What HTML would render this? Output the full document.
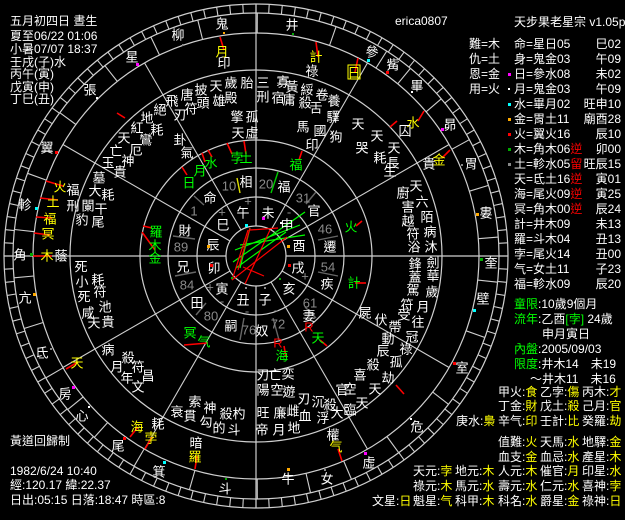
<!DOCTYPE html>
<html><head><meta charset="utf-8"><style>
html,body{margin:0;padding:0;background:#000;width:625px;height:520px;overflow:hidden}
svg{display:block}
text{font-family:"Liberation Sans","Noto Sans CJK TC","WenQuanYi Zen Hei",sans-serif}
.c text{font-size:13px;fill:#fff;text-anchor:middle;dominant-baseline:central}
.y{fill:#ff0!important}.g{fill:#0f0!important}.r{fill:#f00!important}.n{fill:#8a8a8a!important}
.h text{font-size:12px;fill:#fff}
.t text{font-size:12px;fill:#fff}
</style></head><body>
<svg id="s" width="625" height="520" viewBox="0 0 625 520" xmlns="http://www.w3.org/2000/svg">
<rect width="625" height="520" fill="#000"/>
<g fill="none" stroke="#cfcfcf" stroke-width="1.2">
<circle cx="256" cy="256" r="252"/>
<circle cx="256" cy="256" r="243"/>
<circle cx="256" cy="256" r="223"/>
<circle cx="256" cy="256" r="186"/>
<circle cx="256" cy="256" r="116"/>
<circle cx="256" cy="256" r="88"/>
<circle cx="256" cy="256" r="59"/>
<circle cx="256" cy="256" r="30"/>
<line x1="256" y1="4" x2="256" y2="226"/>
<line x1="256" y1="286" x2="256" y2="508"/>
<line x1="4" y1="256" x2="226" y2="256"/>
<line x1="286" y1="256" x2="508" y2="256"/>
</g>
<g id="geo" fill="none" stroke="#cfcfcf" stroke-width="1.1"></g>
<g stroke-width="1.2">
<line x1="235" y1="250" x2="300" y2="225" stroke="#0f0"/>
<line x1="233" y1="262" x2="305" y2="212" stroke="#0f0"/>
<line x1="236" y1="268" x2="286" y2="232" stroke="#0f0"/>
<line x1="240" y1="245" x2="305" y2="235" stroke="#0f0"/>
<line x1="250" y1="228" x2="240" y2="268" stroke="#0f0"/>
<line x1="248" y1="230" x2="232" y2="280" stroke="#f00"/>
<line x1="250" y1="230" x2="278" y2="228" stroke="#f00"/>
<line x1="232" y1="280" x2="287" y2="237" stroke="#f00"/>
<line x1="243" y1="267" x2="264" y2="276" stroke="#f00"/>
<line x1="238" y1="270" x2="250" y2="228" stroke="#f00"/>
<line x1="245" y1="284" x2="270" y2="230" stroke="#f00"/>
</g>
<g stroke-width="1.4">
<line x1="237" y1="178" x2="240" y2="193" stroke="#dd0"/>
<line x1="278" y1="172" x2="271" y2="193" stroke="#0c0"/>
<line x1="194" y1="196" x2="204" y2="205" stroke="#666"/>
<line x1="316" y1="192" x2="306" y2="204" stroke="#666"/>
<line x1="173" y1="236" x2="195" y2="239" stroke="#666"/>
<line x1="338" y1="236" x2="318" y2="240" stroke="#666"/>
<line x1="175" y1="276" x2="196" y2="272" stroke="#666"/>
<line x1="338" y1="276" x2="318" y2="272" stroke="#666"/>
<line x1="196" y1="315" x2="206" y2="303" stroke="#666"/>
<line x1="316" y1="318" x2="305" y2="307" stroke="#666"/>
<line x1="240" y1="340" x2="244" y2="318" stroke="#666"/>
<line x1="279" y1="340" x2="273" y2="318" stroke="#666"/>
</g>
<g stroke="#f00" stroke-width="1.6">
<line x1="220" y1="37" x2="224" y2="50"/><line x1="316" y1="42" x2="318" y2="57"/>
<line x1="358" y1="58" x2="355" y2="72"/><line x1="424" y1="111" x2="418" y2="121"/>
<line x1="450" y1="150" x2="442" y2="158"/><line x1="46" y1="181" x2="63" y2="186"/>
<line x1="40" y1="198" x2="58" y2="200"/><line x1="36" y1="217" x2="52" y2="218"/>
<line x1="34" y1="233" x2="50" y2="235"/><line x1="33" y1="256" x2="52" y2="256"/>
<line x1="66" y1="369" x2="78" y2="362"/><line x1="130" y1="437" x2="138" y2="427"/>
<line x1="145" y1="449" x2="152" y2="437"/><line x1="195" y1="469" x2="197" y2="456"/>
<line x1="342" y1="461" x2="338" y2="449"/><line x1="227" y1="143" x2="232" y2="154"/>
<line x1="244" y1="141" x2="246" y2="154"/><line x1="302" y1="151" x2="299" y2="160"/>
<line x1="182" y1="167" x2="187" y2="175"/><line x1="202" y1="153" x2="205" y2="162"/>
<line x1="208" y1="150" x2="212" y2="157"/><line x1="143" y1="226" x2="152" y2="228"/>
<line x1="142" y1="232" x2="155" y2="250"/><line x1="184" y1="345" x2="208" y2="343"/>
<line x1="286" y1="357" x2="284" y2="346"/><line x1="327" y1="346" x2="320" y2="340"/>
<line x1="366" y1="283" x2="355" y2="283"/><line x1="362" y1="221" x2="356" y2="226"/>
<line x1="404" y1="394" x2="396" y2="385"/><line x1="125" y1="118" x2="117" y2="113"/>
<line x1="397" y1="121" x2="390" y2="127"/>
</g>
<g class="c">
<text x="222" y="24">鬼</text><text x="178" y="35">柳</text><text x="132" y="57">星</text><text x="90" y="90">張</text>
<text x="47" y="148">翼</text><text x="25" y="205">軫</text><text x="20" y="255">角</text><text x="25" y="298">亢</text>
<text x="42" y="353">氐</text><text x="65" y="394">房</text><text x="82" y="416">心</text><text x="118" y="446">尾</text>
<text x="159" y="472">箕</text><text x="225" y="489">斗</text><text x="288" y="479">牛</text><text x="327" y="479">女</text>
<text x="369" y="463">虛</text><text x="417" y="427">危</text><text x="462" y="368">室</text><text x="483" y="299">壁</text>
<text x="491" y="263">奎</text><text x="486" y="213">婁</text><text x="471" y="164">胃</text><text x="450" y="125">昴</text>
<text x="417" y="86">畢</text><text x="393" y="65">觜</text><text x="372" y="52">參</text><text x="292" y="25">井</text>
<text x="222" y="52" class="y">月</text><text x="224" y="63">印</text>
<text x="316" y="57" class="y">計</text><text x="312" y="71">祿</text>
<text x="354" y="73" class="y">日</text><text x="413" y="123" class="y">水</text><text x="439" y="160" class="y">金</text>
<text x="60" y="187" class="y">火</text><text x="73" y="190">福</text>
<text x="53" y="202" class="y">土</text><text x="73" y="206">刑</text>
<text x="50" y="219" class="y">福</text><text x="48" y="234" class="y">冥</text>
<text x="47" y="256" class="y">木</text><text x="61" y="256">蔭</text>
<text x="77" y="363" class="y">天</text><text x="137" y="427" class="y">海</text><text x="151" y="438" class="y">孛</text>
<text x="158" y="424">耗</text><text x="196" y="443">暗</text><text x="195" y="457" class="y">羅</text>
<text x="336" y="447" class="y">气</text><text x="333" y="435">權</text>
<text x="237" y="158" class="g">孛</text><text x="246" y="158" class="g">土</text>
<text x="296" y="165" class="g">福</text><text x="189" y="183" class="g">日</text>
<text x="200" y="171" class="g">月</text><text x="211" y="163" class="g">水</text>
<text x="156" y="232" class="g">羅</text><text x="155" y="246" class="g">木</text><text x="155" y="258" class="g">金</text>
<text x="190" y="333" class="g">冥</text><text x="204" y="342" class="g">气</text>
<text x="282" y="356" class="g">海</text><text x="278" y="343" class="r">R</text>
<text x="318" y="338" class="g">天</text><text x="309" y="327" class="r">R</text>
<text x="354" y="283" class="g">計</text><text x="351" y="227" class="g">火</text>
<text x="247" y="83">胎</text><text x="231" y="83">歲</text><text x="231" y="98">殿</text>
<text x="216" y="86">天</text><text x="219" y="101">雄</text><text x="201" y="90">披</text><text x="203" y="103">頭</text>
<text x="187" y="95">唐</text><text x="191" y="109">符</text><text x="172" y="101">飛</text><text x="180" y="115">刃</text>
<text x="160" y="110">絕</text><text x="147" y="118">地</text><text x="157" y="130">耗</text><text x="137" y="128">紅</text>
<text x="146" y="140">鸞</text><text x="124" y="138">天</text><text x="136" y="150">厄</text><text x="116" y="151">亡</text>
<text x="128" y="161">神</text><text x="108" y="163">玉</text><text x="120" y="172">貴</text>
<text x="237" y="117">擎</text><text x="252" y="117">孤</text><text x="238" y="133">天</text><text x="252" y="133">虛</text>
<text x="180" y="140">卦</text><text x="187" y="153">氣</text>
<text x="99" y="178">墓</text><text x="95" y="191">大</text><text x="108" y="195">耗</text>
<text x="88" y="206">闌</text><text x="101" y="209">干</text><text x="82" y="220">豹</text><text x="98" y="222">尾</text>
<text x="263" y="83">三</text><text x="283" y="82">寡</text><text x="292" y="87">黃</text>
<text x="263" y="97">刑</text><text x="278" y="98">宿</text><text x="289" y="100">庸</text>
<text x="307" y="90">綏</text><text x="305" y="103">殺</text><text x="322" y="95">卷</text><text x="316" y="108">舌</text><text x="334" y="101">養</text>
<text x="320" y="131">國</text><text x="312" y="145">印</text>
<text x="333" y="117">驛</text><text x="303" y="127">馬</text><text x="358" y="124">天</text><text x="336" y="137">狗</text>
<text x="377" y="136">天</text><text x="362" y="148">哭</text><text x="394" y="148">天</text><text x="380" y="158">耗</text>
<text x="393" y="163">長</text><text x="390" y="171">生</text><text x="405" y="131">囚</text><text x="429" y="164">貴</text>
<text x="416" y="186">天</text><text x="403" y="193">廚</text><text x="422" y="202">六</text><text x="408" y="207">害</text>
<text x="427" y="217">陌</text><text x="408" y="221">越</text><text x="430" y="232">病</text><text x="413" y="234">符</text>
<text x="431" y="247">沐</text><text x="414" y="247">浴</text>
<text x="415" y="264">鋒</text><text x="433" y="263">劍</text><text x="415" y="277">蓋</text><text x="433" y="276">華</text>
<text x="413" y="290">駕</text><text x="432" y="292">歲</text><text x="407" y="305">符</text><text x="423" y="307">月</text>
<text x="404" y="315">受</text><text x="418" y="322">往</text><text x="395" y="327">帶</text><text x="412" y="337">冠</text>
<text x="388" y="339">動</text><text x="406" y="349">祿</text><text x="383" y="351">辰</text><text x="396" y="362">孤</text>
<text x="373" y="365">殺</text><text x="388" y="378">劫</text><text x="360" y="375">喜</text><text x="375" y="389">天</text>
<text x="350" y="389">空</text><text x="362" y="403">天</text><text x="342" y="390">官</text><text x="350" y="410">臨</text>
<text x="330" y="405">殺</text><text x="337" y="413">大</text><text x="318" y="402">沉</text><text x="323" y="418">浮</text>
<text x="304" y="399">刃</text><text x="305" y="416">血</text>
<text x="365" y="313">屍</text><text x="381" y="320">伏</text>
<text x="263" y="375">刃</text><text x="275" y="375">亡</text><text x="288" y="374">奕</text>
<text x="263" y="390">陽</text><text x="277" y="390">空</text><text x="289" y="392">遊</text>
<text x="263" y="413">旺</text><text x="280" y="413">廉</text><text x="293" y="411">雌</text>
<text x="262" y="430">帝</text><text x="279" y="430">月</text><text x="294" y="428">地</text>
<text x="108" y="350">病</text><text x="128" y="358">殺</text><text x="117" y="367">月</text><text x="138" y="367">符</text>
<text x="127" y="378">年</text><text x="148" y="376">昌</text><text x="138" y="387">文</text>
<text x="177" y="412">衰</text><text x="195" y="402">索</text><text x="190" y="416">貫</text><text x="210" y="408">神</text>
<text x="206" y="422">勾</text><text x="226" y="414">殺</text><text x="219" y="428">的</text><text x="239" y="414">杓</text><text x="234" y="430">斗</text>
<text x="81" y="267">死</text><text x="82" y="282">小</text><text x="98" y="280">耗</text><text x="84" y="297">死</text>
<text x="100" y="292">符</text><text x="88" y="313">咸</text><text x="105" y="307">池</text><text x="94" y="323">天</text><text x="108" y="322">貴</text>
<text x="246" y="182">相</text><text x="229" y="186" class="n">10</text>
<text x="284" y="187">福</text><text x="266" y="184" class="n">20</text>
<text x="210" y="198">命</text><text x="194" y="211" class="n">1</text>
<text x="314" y="211">官</text><text x="303" y="198" class="n">31</text>
<text x="185" y="231">財</text><text x="181" y="247" class="n">89</text>
<text x="330" y="247">遷</text><text x="325" y="229" class="n">46</text>
<text x="183" y="267">兄</text><text x="187" y="285" class="n">84</text>
<text x="327" y="284">疾</text><text x="328" y="267" class="n">54</text>
<text x="197" y="303">田</text><text x="211" y="316" class="n">80</text>
<text x="309" y="316">妻</text><text x="310" y="303" class="n">61</text>
<text x="231" y="326">嗣</text><text x="249" y="330" class="n">76</text>
<text x="262" y="331">奴</text><text x="278" y="324" class="n">72</text>
<text x="243" y="213">午</text><text x="268" y="213">未</text><text x="223" y="225">巳</text><text x="287" y="225">申</text>
<text x="213" y="245">辰</text><text x="299" y="246">酉</text><text x="214" y="268">卯</text><text x="298" y="268">戌</text>
<text x="222" y="289">寅</text><text x="289" y="289">亥</text><text x="243" y="300">丑</text><text x="265" y="300">子</text>
<text x="248" y="201" class="n">+</text><text x="222" y="212" class="n">+</text><text x="289" y="212" class="n">-</text>
<text x="305" y="276" class="n">+</text><text x="210" y="287" class="n">+</text><text x="222" y="301" class="n">-</text><text x="247" y="311" class="n">-</text><text x="276" y="310" class="n">-</text>
</g>
<g>
<rect x="223" y="32" width="2" height="2" fill="#fa0"/><rect x="182" y="44" width="2" height="2" fill="#888"/>
<rect x="136" y="63" width="3" height="3" fill="#f0f"/><rect x="96" y="97" width="2" height="2" fill="#fff"/>
<rect x="55" y="151" width="3" height="3" fill="#f00"/><rect x="35" y="207" width="3" height="3" fill="#0ff"/>
<rect x="30" y="253" width="3" height="3" fill="#0a0"/><rect x="33" y="293" width="3" height="3" fill="#fa0"/>
<rect x="50" y="348" width="2" height="2" fill="#888"/><rect x="72" y="386" width="3" height="3" fill="#f0f"/>
<rect x="88" y="406" width="2" height="2" fill="#fff"/><rect x="123" y="437" width="3" height="3" fill="#f00"/>
<rect x="163" y="461" width="3" height="3" fill="#0ff"/><rect x="225" y="478" width="2" height="2" fill="#0a0"/>
<rect x="287" y="468" width="3" height="3" fill="#fa0"/><rect x="324" y="469" width="2" height="2" fill="#888"/>
<rect x="364" y="452" width="3" height="3" fill="#f0f"/><rect x="410" y="418" width="2" height="2" fill="#fff"/>
<rect x="453" y="362" width="3" height="3" fill="#f00"/><rect x="473" y="309" width="3" height="3" fill="#0ff"/>
<rect x="480" y="258" width="3" height="3" fill="#0a0"/><rect x="476" y="213" width="3" height="3" fill="#fa0"/>
<rect x="461" y="164" width="2" height="2" fill="#888"/><rect x="441" y="128" width="3" height="3" fill="#f0f"/>
<rect x="411" y="91" width="2" height="2" fill="#fff"/><rect x="386" y="71" width="3" height="3" fill="#f00"/>
<rect x="367" y="59" width="3" height="3" fill="#0ff"/><rect x="292" y="33" width="2" height="2" fill="#0a0"/>
<rect x="245" y="224" width="3" height="3" fill="#0ff"/><rect x="262" y="217" width="3" height="3" fill="#f0f"/>
<rect x="280" y="222" width="2" height="2" fill="#fff"/><rect x="207" y="245" width="3" height="3" fill="#fa0"/>
<rect x="287" y="245" width="3" height="3" fill="#fa0"/><rect x="288" y="264" width="3" height="3" fill="#f00"/>
<rect x="210" y="264" width="3" height="3" fill="#f00"/><rect x="231" y="277" width="2" height="2" fill="#0a0"/>
<rect x="279" y="278" width="2" height="2" fill="#0a0"/><rect x="245" y="287" width="2" height="2" fill="#888"/>
<rect x="264" y="287" width="2" height="2" fill="#888"/>
</g>
<rect x="348" y="65" width="12" height="14" fill="none" stroke="#ff0" stroke-width="1"/>
<g class="h">
<text x="10" y="25">五月初四日 晝生</text>
<text x="10" y="40">夏至06/22 01:06</text>
<text x="10" y="53">小暑07/07 18:37</text>
<text x="10" y="66">壬戌(子)水</text>
<text x="10" y="78">丙午(寅)</text>
<text x="10" y="91">戊寅(申)</text>
<text x="10" y="103">丁巳(丑)</text>
<text x="10" y="445">黃道回歸制</text>
<text x="10" y="475">1982/6/24 10:40</text>
<text x="10" y="489">經:120.17 緯:22.37</text>
<text x="10" y="504">日出:05:15 日落:18:47 時區:8</text>
<text x="395" y="25">erica0807</text>
</g>
<g class="t">
<text x="514" y="26">天步果老星宗 v1.05p</text>
<text x="469" y="48">難=木</text><text x="469" y="63">仇=土</text><text x="469" y="78">恩=金</text><text x="469" y="93">用=火</text>
<text x="514" y="48" fill="#ff0">命=星日05</text><text x="514" y="63" fill="#ff0">身=鬼金03</text>
<text x="514" y="78" fill="#ff0">日=參水08</text><text x="514" y="93" fill="#ff0">月=鬼金03</text>
<text x="514" y="108" fill="#ff0">水=畢月02</text><text x="514" y="123" fill="#ff0">金=胃土11</text>
<text x="514" y="138" fill="#ff0">火=翼火16</text><text x="514" y="153" fill="#ff0">木=角木06<tspan fill="#f00">逆</tspan></text>
<text x="514" y="168" fill="#ff0">土=軫水05<tspan fill="#f00">留</tspan></text><text x="514" y="183" fill="#ff0">天=氐土16<tspan fill="#f00">逆</tspan></text>
<text x="514" y="198" fill="#ff0">海=尾火09<tspan fill="#f00">逆</tspan></text><text x="514" y="213" fill="#ff0">冥=角木00<tspan fill="#f00">逆</tspan></text>
<text x="514" y="228" fill="#ff0">計=井木09</text><text x="514" y="243" fill="#ff0">羅=斗木04</text>
<text x="514" y="258" fill="#ff0">孛=尾火14</text><text x="514" y="273" fill="#ff0">气=女土11</text>
<text x="514" y="288" fill="#ff0">福=軫水09</text>
<g text-anchor="end">
<text x="621" y="48">巳02</text><text x="621" y="63">午09</text><text x="621" y="78">未02</text><text x="621" y="93">午09</text>
<text x="621" y="108">旺申10</text><text x="621" y="123">廟酉28</text><text x="621" y="138">辰10</text><text x="621" y="153">卯00</text>
<text x="621" y="168">旺辰15</text><text x="621" y="183">寅01</text><text x="621" y="198">寅25</text><text x="621" y="213">辰24</text>
<text x="621" y="228">未13</text><text x="621" y="243">丑13</text><text x="621" y="258">丑00</text><text x="621" y="273">子23</text><text x="621" y="288">辰20</text>
</g>
<rect x="508" y="73" width="3" height="3" fill="#f0f"/><rect x="508" y="88" width="2" height="2" fill="#fff"/>
<rect x="508" y="103" width="3" height="3" fill="#0ff"/><rect x="508" y="118" width="3" height="3" fill="#fa0"/>
<rect x="508" y="133" width="3" height="3" fill="#f00"/><rect x="508" y="148" width="3" height="3" fill="#0a0"/>
<rect x="508" y="163" width="3" height="3" fill="#888"/>
<text x="514" y="308"><tspan fill="#0f0">童限</tspan>:10歲9個月</text>
<text x="514" y="323"><tspan fill="#0f0">流年</tspan>:乙酉<tspan fill="#0f0">[孛]</tspan>  24歲</text>
<text x="542" y="338">申月寅日</text>
<text x="514" y="353"><tspan fill="#0f0">內盤</tspan>:2005/09/03</text>
<text x="514" y="368"><tspan fill="#0f0">限度</tspan>:井木14　未19</text>
<text x="530" y="383">～井木11　未16</text>
<text x="498" y="396">甲火:<tspan fill="#ff0">食</tspan></text><text x="540" y="396">乙孛:<tspan fill="#ff0">傷</tspan></text><text x="582" y="396">丙木:<tspan fill="#ff0">才</tspan></text>
<text x="498" y="410">丁金:<tspan fill="#ff0">財</tspan></text><text x="540" y="410">戊土:<tspan fill="#ff0">殺</tspan></text><text x="582" y="410">己月:<tspan fill="#ff0">官</tspan></text>
<text x="456" y="425">庚水:<tspan fill="#ff0">梟</tspan></text><text x="498" y="425">辛气:<tspan fill="#ff0">印</tspan></text><text x="540" y="425">壬計:<tspan fill="#ff0">比</tspan></text><text x="582" y="425">癸羅:<tspan fill="#ff0">劫</tspan></text>
<text x="498" y="446">值難:<tspan fill="#ff0">火</tspan></text><text x="540" y="446">天馬:<tspan fill="#ff0">水</tspan></text><text x="582" y="446">地驛:<tspan fill="#ff0">金</tspan></text>
<text x="498" y="461">血支:<tspan fill="#ff0">金</tspan></text><text x="540" y="461">血忌:<tspan fill="#ff0">水</tspan></text><text x="582" y="461">產星:<tspan fill="#ff0">木</tspan></text>
<text x="413" y="475">天元:<tspan fill="#ff0">孛</tspan></text><text x="455" y="475">地元:<tspan fill="#ff0">木</tspan></text><text x="498" y="475">人元:<tspan fill="#ff0">木</tspan></text><text x="540" y="475">催官:<tspan fill="#ff0">月</tspan></text><text x="582" y="475">印星:<tspan fill="#ff0">水</tspan></text>
<text x="413" y="490">祿元:<tspan fill="#ff0">木</tspan></text><text x="455" y="490">馬元:<tspan fill="#ff0">水</tspan></text><text x="498" y="490">壽元:<tspan fill="#ff0">水</tspan></text><text x="540" y="490">仁元:<tspan fill="#ff0">水</tspan></text><text x="582" y="490">喜神:<tspan fill="#ff0">孛</tspan></text>
<text x="372" y="505">文星:<tspan fill="#ff0">日</tspan></text><text x="413" y="505">魁星:<tspan fill="#ff0">气</tspan></text><text x="455" y="505">科甲:<tspan fill="#ff0">木</tspan></text><text x="498" y="505">科名:<tspan fill="#ff0">水</tspan></text><text x="540" y="505">爵星:<tspan fill="#ff0">金</tspan></text><text x="582" y="505">祿神:<tspan fill="#ff0">日</tspan></text>
</g>
</svg>
<script>
(function(){
var g=document.getElementById('geo'),cx=256,cy=256,h='';
function L(a,r1,r2){var t=a*Math.PI/180;h+='<line x1="'+(cx+r1*Math.cos(t)).toFixed(1)+'" y1="'+(cy-r1*Math.sin(t)).toFixed(1)+'" x2="'+(cx+r2*Math.cos(t)).toFixed(1)+'" y2="'+(cy-r2*Math.sin(t)).toFixed(1)+'"/>';}
[30,60,120,150,210,240,300,330].forEach(function(a){L(a,30,223);});
for(var a=0;a<360;a+=3)L(a,243,252);
var m=[81.1,98.3,109.4,121.9,135,152.7,167.5,180,190.3,204.4,215.8,222.6,234,245.8,262.4,278.2,287.7,298.6,313.3,331.5,349.3,358.3,370.6,383.2,394,406.6,414.5,420.4,441.1];
for(var i=0;i<m.length-1;i++)L((m[i]+m[i+1])/2,223,243);
g.innerHTML=h;
})();
</script>
</body></html>
